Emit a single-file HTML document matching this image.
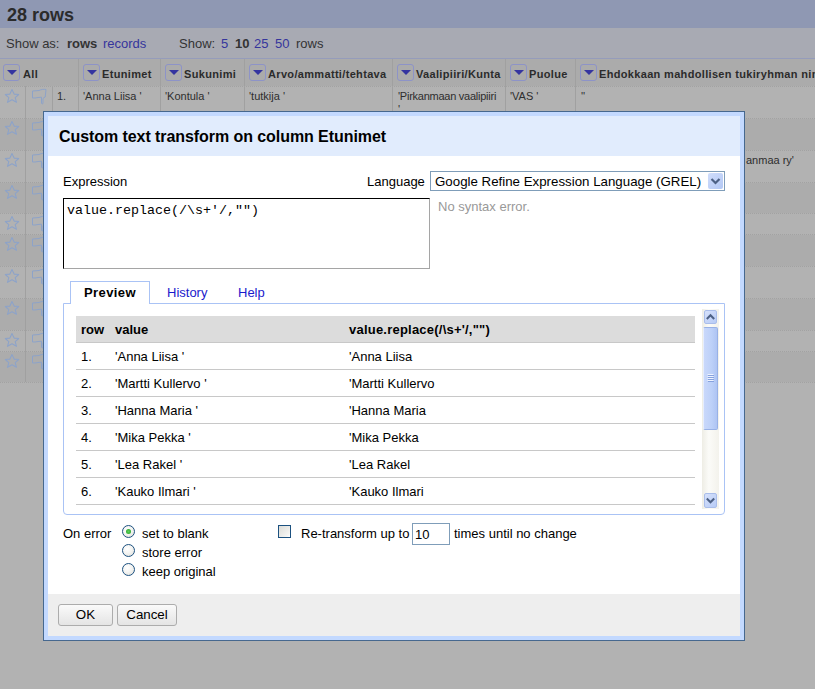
<!DOCTYPE html><html><head><meta charset="utf-8"><style>
*{margin:0;padding:0;box-sizing:border-box}
html,body{width:815px;height:689px;overflow:hidden;background:#b2b2b2;font-family:"Liberation Sans",sans-serif;font-size:13px;color:#000}
.a{position:absolute;white-space:nowrap}
.r{position:absolute}
.dd{position:absolute;width:17px;height:17px;border:1px solid #8d93c8;border-radius:3px}
.dd:after{content:"";position:absolute;left:2.5px;top:5px;border-left:5px solid transparent;border-right:5px solid transparent;border-top:5.5px solid #3535a0}
.btn{position:absolute;height:22px;border:1px solid #acacac;border-radius:3px;background:linear-gradient(#fafafa,#e4e4e4);font-size:13.33px;line-height:20px;text-align:center}
.radio{position:absolute;width:13px;height:13px;border:1px solid #1c5180;border-radius:50%;background:radial-gradient(circle at 40% 35%,#ffffff 0,#f4f4f2 45%,#dcdcd6 100%)}
</style></head><body>
<div class="r" style="left:0;top:0;width:815px;height:28px;background:#8f98b3"></div>
<div class="a" style="left:7px;top:5.00px;font-size:18px;line-height:20px;font-weight:bold;color:#2b2b2b">28 rows</div>
<div class="r" style="left:0;top:28px;width:815px;height:30px;background:#a8aab3"></div>
<div class="r" style="left:0;top:58px;width:815px;height:1px;background:#959cbb"></div>
<div class="a" style="left:6px;top:36.00px;font-size:13px;line-height:15px;color:#333">Show as:</div>
<div class="a" style="left:67px;top:36.00px;font-size:13px;line-height:15px;color:#333;font-weight:bold">rows</div>
<div class="a" style="left:103px;top:36.00px;font-size:13px;line-height:15px;color:#35359c">records</div>
<div class="a" style="left:179px;top:36.00px;font-size:13px;line-height:15px;color:#333">Show:</div>
<div class="a" style="left:221px;top:36.00px;font-size:13px;line-height:15px;color:#35359c">5</div>
<div class="a" style="left:235px;top:36.00px;font-size:13px;line-height:15px;color:#333;font-weight:bold">10</div>
<div class="a" style="left:254px;top:36.00px;font-size:13px;line-height:15px;color:#35359c">25</div>
<div class="a" style="left:275px;top:36.00px;font-size:13px;line-height:15px;color:#35359c">50</div>
<div class="a" style="left:296px;top:36.00px;font-size:13px;line-height:15px;color:#333">rows</div>
<div class="r" style="left:0;top:59px;width:815px;height:27px;background:#ababab"></div>
<div class="r" style="left:78px;top:59px;width:1px;height:323px;background:#a0a0a0"></div>
<div class="r" style="left:160px;top:59px;width:1px;height:323px;background:#a0a0a0"></div>
<div class="r" style="left:244px;top:59px;width:1px;height:323px;background:#a0a0a0"></div>
<div class="r" style="left:392px;top:59px;width:1px;height:323px;background:#a0a0a0"></div>
<div class="r" style="left:505px;top:59px;width:1px;height:323px;background:#a0a0a0"></div>
<div class="r" style="left:575px;top:59px;width:1px;height:323px;background:#a0a0a0"></div>
<div class="r" style="left:25px;top:86px;width:1px;height:296px;background:#a0a0a0"></div>
<div class="r" style="left:52px;top:86px;width:1px;height:296px;background:#a0a0a0"></div>
<div class="dd" style="left:3px;top:64px"></div>
<div class="a" style="left:23px;top:68.00px;font-size:11px;line-height:12px;font-weight:bold;color:#2b2b2b;letter-spacing:0.33px">All</div>
<div class="dd" style="left:83px;top:64px"></div>
<div class="a" style="left:102px;top:68.00px;font-size:11px;line-height:12px;font-weight:bold;color:#2b2b2b;letter-spacing:0.33px">Etunimet</div>
<div class="dd" style="left:165px;top:64px"></div>
<div class="a" style="left:184px;top:68.00px;font-size:11px;line-height:12px;font-weight:bold;color:#2b2b2b;letter-spacing:0.33px">Sukunimi</div>
<div class="dd" style="left:249px;top:64px"></div>
<div class="a" style="left:268px;top:68.00px;font-size:11px;line-height:12px;font-weight:bold;color:#2b2b2b;letter-spacing:0.33px">Arvo/ammatti/tehtava</div>
<div class="dd" style="left:397px;top:64px"></div>
<div class="a" style="left:416px;top:68.00px;font-size:11px;line-height:12px;font-weight:bold;color:#2b2b2b;letter-spacing:0.33px">Vaalipiiri/Kunta</div>
<div class="dd" style="left:510px;top:64px"></div>
<div class="a" style="left:529px;top:68.00px;font-size:11px;line-height:12px;font-weight:bold;color:#2b2b2b;letter-spacing:0.33px">Puolue</div>
<div class="dd" style="left:580px;top:64px"></div>
<div class="a" style="left:599px;top:68.00px;font-size:11px;line-height:12px;font-weight:bold;color:#2b2b2b;letter-spacing:0.33px">Ehdokkaan mahdollisen tukiryhman nimi</div>
<div class="r" style="left:0;top:87px;width:815px;height:31px;background:#b2b2b2"></div>
<div class="r" style="left:0;top:119px;width:815px;height:31px;background:#acacac"></div>
<div class="r" style="left:0;top:151px;width:815px;height:31px;background:#b2b2b2"></div>
<div class="r" style="left:0;top:183px;width:815px;height:30px;background:#acacac"></div>
<div class="r" style="left:0;top:214px;width:815px;height:20px;background:#b2b2b2"></div>
<div class="r" style="left:0;top:235px;width:815px;height:31px;background:#acacac"></div>
<div class="r" style="left:0;top:267px;width:815px;height:31px;background:#b2b2b2"></div>
<div class="r" style="left:0;top:299px;width:815px;height:31px;background:#acacac"></div>
<div class="r" style="left:0;top:331px;width:815px;height:20px;background:#b2b2b2"></div>
<div class="r" style="left:0;top:352px;width:815px;height:30px;background:#acacac"></div>
<div class="r" style="left:0;top:86px;width:815px;height:1px;background-image:linear-gradient(90deg,#a2a2a2 50%,transparent 50%);background-size:2px 1px"></div>
<div class="r" style="left:0;top:118px;width:815px;height:1px;background-image:linear-gradient(90deg,#a2a2a2 50%,transparent 50%);background-size:2px 1px"></div>
<div class="r" style="left:0;top:150px;width:815px;height:1px;background-image:linear-gradient(90deg,#a2a2a2 50%,transparent 50%);background-size:2px 1px"></div>
<div class="r" style="left:0;top:182px;width:815px;height:1px;background-image:linear-gradient(90deg,#a2a2a2 50%,transparent 50%);background-size:2px 1px"></div>
<div class="r" style="left:0;top:213px;width:815px;height:1px;background-image:linear-gradient(90deg,#a2a2a2 50%,transparent 50%);background-size:2px 1px"></div>
<div class="r" style="left:0;top:234px;width:815px;height:1px;background-image:linear-gradient(90deg,#a2a2a2 50%,transparent 50%);background-size:2px 1px"></div>
<div class="r" style="left:0;top:266px;width:815px;height:1px;background-image:linear-gradient(90deg,#a2a2a2 50%,transparent 50%);background-size:2px 1px"></div>
<div class="r" style="left:0;top:298px;width:815px;height:1px;background-image:linear-gradient(90deg,#a2a2a2 50%,transparent 50%);background-size:2px 1px"></div>
<div class="r" style="left:0;top:330px;width:815px;height:1px;background-image:linear-gradient(90deg,#a2a2a2 50%,transparent 50%);background-size:2px 1px"></div>
<div class="r" style="left:0;top:351px;width:815px;height:1px;background-image:linear-gradient(90deg,#a2a2a2 50%,transparent 50%);background-size:2px 1px"></div>
<div class="r" style="left:0;top:382px;width:815px;height:1px;background-image:linear-gradient(90deg,#a2a2a2 50%,transparent 50%);background-size:2px 1px"></div>
<div class="r" style="left:78px;top:87px;width:1px;height:295px;background:#a0a0a0"></div>
<div class="r" style="left:160px;top:87px;width:1px;height:295px;background:#a0a0a0"></div>
<div class="r" style="left:244px;top:87px;width:1px;height:295px;background:#a0a0a0"></div>
<div class="r" style="left:392px;top:87px;width:1px;height:295px;background:#a0a0a0"></div>
<div class="r" style="left:505px;top:87px;width:1px;height:295px;background:#a0a0a0"></div>
<div class="r" style="left:575px;top:87px;width:1px;height:295px;background:#a0a0a0"></div>
<div class="r" style="left:25px;top:87px;width:1px;height:295px;background:#a0a0a0"></div>
<div class="r" style="left:52px;top:87px;width:1px;height:295px;background:#a0a0a0"></div>
<svg class="r" style="left:0px;top:86px" width="25" height="21" viewBox="0 0 25 21"><path d="M12 3.6 L14.1 8.1 L18.7 8.5 L15.2 11.6 L16.5 16.3 L12 13.8 L7.5 16.3 L8.8 11.6 L5.3 8.5 L9.9 8.1 Z" fill="none" stroke="#8da3c9" stroke-width="1.1" stroke-linejoin="round"/></svg>
<svg class="r" style="left:31px;top:88px" width="18" height="17" viewBox="0 0 18 17"><path d="M1.5 3 C4 2.5 6 3 8 2.5 C10 1.5 13 1 15 1.5 L14.2 9 C13 9.5 12.5 10 12 10.5 L12 15.5 C11.5 16 10.5 16 10.5 15 L10.5 9.2 C8 9.5 6 9.5 4 10 L1.5 10 Z" fill="none" stroke="#8da3c9" stroke-width="1"/></svg>
<svg class="r" style="left:0px;top:118px" width="25" height="21" viewBox="0 0 25 21"><path d="M12 3.6 L14.1 8.1 L18.7 8.5 L15.2 11.6 L16.5 16.3 L12 13.8 L7.5 16.3 L8.8 11.6 L5.3 8.5 L9.9 8.1 Z" fill="none" stroke="#8da3c9" stroke-width="1.1" stroke-linejoin="round"/></svg>
<svg class="r" style="left:31px;top:120px" width="18" height="17" viewBox="0 0 18 17"><path d="M1.5 3 C4 2.5 6 3 8 2.5 C10 1.5 13 1 15 1.5 L14.2 9 C13 9.5 12.5 10 12 10.5 L12 15.5 C11.5 16 10.5 16 10.5 15 L10.5 9.2 C8 9.5 6 9.5 4 10 L1.5 10 Z" fill="none" stroke="#8da3c9" stroke-width="1"/></svg>
<svg class="r" style="left:0px;top:150px" width="25" height="21" viewBox="0 0 25 21"><path d="M12 3.6 L14.1 8.1 L18.7 8.5 L15.2 11.6 L16.5 16.3 L12 13.8 L7.5 16.3 L8.8 11.6 L5.3 8.5 L9.9 8.1 Z" fill="none" stroke="#8da3c9" stroke-width="1.1" stroke-linejoin="round"/></svg>
<svg class="r" style="left:31px;top:152px" width="18" height="17" viewBox="0 0 18 17"><path d="M1.5 3 C4 2.5 6 3 8 2.5 C10 1.5 13 1 15 1.5 L14.2 9 C13 9.5 12.5 10 12 10.5 L12 15.5 C11.5 16 10.5 16 10.5 15 L10.5 9.2 C8 9.5 6 9.5 4 10 L1.5 10 Z" fill="none" stroke="#8da3c9" stroke-width="1"/></svg>
<svg class="r" style="left:0px;top:182px" width="25" height="21" viewBox="0 0 25 21"><path d="M12 3.6 L14.1 8.1 L18.7 8.5 L15.2 11.6 L16.5 16.3 L12 13.8 L7.5 16.3 L8.8 11.6 L5.3 8.5 L9.9 8.1 Z" fill="none" stroke="#8da3c9" stroke-width="1.1" stroke-linejoin="round"/></svg>
<svg class="r" style="left:31px;top:184px" width="18" height="17" viewBox="0 0 18 17"><path d="M1.5 3 C4 2.5 6 3 8 2.5 C10 1.5 13 1 15 1.5 L14.2 9 C13 9.5 12.5 10 12 10.5 L12 15.5 C11.5 16 10.5 16 10.5 15 L10.5 9.2 C8 9.5 6 9.5 4 10 L1.5 10 Z" fill="none" stroke="#8da3c9" stroke-width="1"/></svg>
<svg class="r" style="left:0px;top:213px" width="25" height="21" viewBox="0 0 25 21"><path d="M12 3.6 L14.1 8.1 L18.7 8.5 L15.2 11.6 L16.5 16.3 L12 13.8 L7.5 16.3 L8.8 11.6 L5.3 8.5 L9.9 8.1 Z" fill="none" stroke="#8da3c9" stroke-width="1.1" stroke-linejoin="round"/></svg>
<svg class="r" style="left:31px;top:215px" width="18" height="17" viewBox="0 0 18 17"><path d="M1.5 3 C4 2.5 6 3 8 2.5 C10 1.5 13 1 15 1.5 L14.2 9 C13 9.5 12.5 10 12 10.5 L12 15.5 C11.5 16 10.5 16 10.5 15 L10.5 9.2 C8 9.5 6 9.5 4 10 L1.5 10 Z" fill="none" stroke="#8da3c9" stroke-width="1"/></svg>
<svg class="r" style="left:0px;top:234px" width="25" height="21" viewBox="0 0 25 21"><path d="M12 3.6 L14.1 8.1 L18.7 8.5 L15.2 11.6 L16.5 16.3 L12 13.8 L7.5 16.3 L8.8 11.6 L5.3 8.5 L9.9 8.1 Z" fill="none" stroke="#8da3c9" stroke-width="1.1" stroke-linejoin="round"/></svg>
<svg class="r" style="left:31px;top:236px" width="18" height="17" viewBox="0 0 18 17"><path d="M1.5 3 C4 2.5 6 3 8 2.5 C10 1.5 13 1 15 1.5 L14.2 9 C13 9.5 12.5 10 12 10.5 L12 15.5 C11.5 16 10.5 16 10.5 15 L10.5 9.2 C8 9.5 6 9.5 4 10 L1.5 10 Z" fill="none" stroke="#8da3c9" stroke-width="1"/></svg>
<svg class="r" style="left:0px;top:266px" width="25" height="21" viewBox="0 0 25 21"><path d="M12 3.6 L14.1 8.1 L18.7 8.5 L15.2 11.6 L16.5 16.3 L12 13.8 L7.5 16.3 L8.8 11.6 L5.3 8.5 L9.9 8.1 Z" fill="none" stroke="#8da3c9" stroke-width="1.1" stroke-linejoin="round"/></svg>
<svg class="r" style="left:31px;top:268px" width="18" height="17" viewBox="0 0 18 17"><path d="M1.5 3 C4 2.5 6 3 8 2.5 C10 1.5 13 1 15 1.5 L14.2 9 C13 9.5 12.5 10 12 10.5 L12 15.5 C11.5 16 10.5 16 10.5 15 L10.5 9.2 C8 9.5 6 9.5 4 10 L1.5 10 Z" fill="none" stroke="#8da3c9" stroke-width="1"/></svg>
<svg class="r" style="left:0px;top:298px" width="25" height="21" viewBox="0 0 25 21"><path d="M12 3.6 L14.1 8.1 L18.7 8.5 L15.2 11.6 L16.5 16.3 L12 13.8 L7.5 16.3 L8.8 11.6 L5.3 8.5 L9.9 8.1 Z" fill="none" stroke="#8da3c9" stroke-width="1.1" stroke-linejoin="round"/></svg>
<svg class="r" style="left:31px;top:300px" width="18" height="17" viewBox="0 0 18 17"><path d="M1.5 3 C4 2.5 6 3 8 2.5 C10 1.5 13 1 15 1.5 L14.2 9 C13 9.5 12.5 10 12 10.5 L12 15.5 C11.5 16 10.5 16 10.5 15 L10.5 9.2 C8 9.5 6 9.5 4 10 L1.5 10 Z" fill="none" stroke="#8da3c9" stroke-width="1"/></svg>
<svg class="r" style="left:0px;top:330px" width="25" height="21" viewBox="0 0 25 21"><path d="M12 3.6 L14.1 8.1 L18.7 8.5 L15.2 11.6 L16.5 16.3 L12 13.8 L7.5 16.3 L8.8 11.6 L5.3 8.5 L9.9 8.1 Z" fill="none" stroke="#8da3c9" stroke-width="1.1" stroke-linejoin="round"/></svg>
<svg class="r" style="left:31px;top:332px" width="18" height="17" viewBox="0 0 18 17"><path d="M1.5 3 C4 2.5 6 3 8 2.5 C10 1.5 13 1 15 1.5 L14.2 9 C13 9.5 12.5 10 12 10.5 L12 15.5 C11.5 16 10.5 16 10.5 15 L10.5 9.2 C8 9.5 6 9.5 4 10 L1.5 10 Z" fill="none" stroke="#8da3c9" stroke-width="1"/></svg>
<svg class="r" style="left:0px;top:351px" width="25" height="21" viewBox="0 0 25 21"><path d="M12 3.6 L14.1 8.1 L18.7 8.5 L15.2 11.6 L16.5 16.3 L12 13.8 L7.5 16.3 L8.8 11.6 L5.3 8.5 L9.9 8.1 Z" fill="none" stroke="#8da3c9" stroke-width="1.1" stroke-linejoin="round"/></svg>
<svg class="r" style="left:31px;top:353px" width="18" height="17" viewBox="0 0 18 17"><path d="M1.5 3 C4 2.5 6 3 8 2.5 C10 1.5 13 1 15 1.5 L14.2 9 C13 9.5 12.5 10 12 10.5 L12 15.5 C11.5 16 10.5 16 10.5 15 L10.5 9.2 C8 9.5 6 9.5 4 10 L1.5 10 Z" fill="none" stroke="#8da3c9" stroke-width="1"/></svg>
<div class="a" style="left:57px;top:90.00px;font-size:11px;line-height:12px;color:#2e2e2e">1.</div>
<div class="a" style="left:83px;top:90.00px;font-size:11px;line-height:12px;color:#2e2e2e">'Anna Liisa '</div>
<div class="a" style="left:165px;top:90.00px;font-size:11px;line-height:12px;color:#2e2e2e">'Kontula '</div>
<div class="a" style="left:249px;top:90.00px;font-size:11px;line-height:12px;color:#2e2e2e">'tutkija '</div>
<div class="a" style="left:398px;top:90.00px;font-size:11px;line-height:12px;color:#2e2e2e;letter-spacing:-0.25px">'Pirkanmaan vaalipiiri</div>
<div class="a" style="left:398px;top:103.00px;font-size:11px;line-height:12px;color:#2e2e2e">'</div>
<div class="a" style="left:510px;top:90.00px;font-size:11px;line-height:12px;color:#2e2e2e">'VAS '</div>
<div class="a" style="left:581px;top:90.00px;font-size:11px;line-height:12px;color:#2e2e2e">''</div>
<div class="a" style="left:746px;top:154.00px;font-size:11px;line-height:12px;color:#2e2e2e">anmaa ry'</div>
<div class="r" style="left:43px;top:111px;width:702px;height:530px;border:1px solid #46688f;background:#c3d9ff"></div>
<div class="r" style="left:48px;top:116px;width:692px;height:40px;background:#e1ecfd"></div>
<div class="a" style="left:59px;top:128.00px;font-size:16px;line-height:17px;font-weight:bold;letter-spacing:-0.07px">Custom text transform on column Etunimet</div>
<div class="r" style="left:48px;top:156px;width:692px;height:438px;background:#fff"></div>
<div class="r" style="left:48px;top:594px;width:692px;height:42px;background:#eeeeee"></div>
<div class="btn" style="left:58px;top:604px;width:55px">OK</div>
<div class="btn" style="left:117px;top:604px;width:60px">Cancel</div>
<div class="a" style="left:63px;top:174.00px;font-size:13px;line-height:15px;">Expression</div>
<div class="a" style="left:367px;top:174.00px;font-size:13px;line-height:15px;">Language</div>
<div class="r" style="left:430px;top:171px;width:295px;height:20px;border:1px solid #7f9db9;background:#fff"></div>
<div class="a" style="left:435px;top:174.00px;font-size:13.3px;line-height:15px;">Google Refine Expression Language (GREL)</div>
<div class="r" style="left:708px;top:173px;width:15px;height:16px;border-radius:2px;background:linear-gradient(135deg,#d0ddfb,#b3c8f5)"></div>
<svg class="r" style="left:708px;top:173px" width="15" height="16" viewBox="0 0 15 16"><path d="M3.5 6 L7.5 10 L11.5 6" fill="none" stroke="#4d6185" stroke-width="2.2"/></svg>
<div class="r" style="left:63px;top:198px;width:367px;height:71px;border-top:1px solid #000;border-left:1px solid #000;border-right:1px solid #a5a5a5;border-bottom:1px solid #a5a5a5;background:#fff"></div>
<div class="a" style="left:67px;top:202.5px;font-family:'Liberation Mono',monospace;font-size:13.33px;line-height:15px">value.replace(/\s+'/,"")</div>
<div class="a" style="left:438px;top:199.00px;font-size:13px;line-height:15px;color:#999">No syntax error.</div>
<div class="r" style="left:63px;top:303px;width:662px;height:212px;border:1px solid #aac3f5;border-radius:0 0 4px 4px"></div>
<div class="r" style="left:70px;top:281px;width:80px;height:23px;border:1px solid #aac3f5;border-bottom:none;background:#fff"></div>
<div class="a" style="left:84px;top:285.00px;font-size:13px;line-height:15px;font-weight:bold;letter-spacing:0.4px">Preview</div>
<div class="a" style="left:167px;top:285.00px;font-size:13px;line-height:15px;color:#1a1acc">History</div>
<div class="a" style="left:238px;top:285.00px;font-size:13px;line-height:15px;color:#1a1acc">Help</div>
<div class="r" style="left:76px;top:316px;width:619px;height:26px;background:#dcdcdc"></div>
<div class="r" style="left:76px;top:342px;width:619px;height:1px;background:#c8c8c8"></div>
<div class="r" style="left:76px;top:369px;width:619px;height:1px;background:#c8c8c8"></div>
<div class="r" style="left:76px;top:396px;width:619px;height:1px;background:#c8c8c8"></div>
<div class="r" style="left:76px;top:423px;width:619px;height:1px;background:#c8c8c8"></div>
<div class="r" style="left:76px;top:450px;width:619px;height:1px;background:#c8c8c8"></div>
<div class="r" style="left:76px;top:477px;width:619px;height:1px;background:#c8c8c8"></div>
<div class="r" style="left:76px;top:504px;width:619px;height:1px;background:#c8c8c8"></div>
<div class="a" style="left:81px;top:322.00px;font-size:13px;line-height:15px;font-weight:bold">row</div>
<div class="a" style="left:115px;top:322.00px;font-size:13px;line-height:15px;font-weight:bold">value</div>
<div class="a" style="left:349px;top:322.00px;font-size:13px;line-height:15px;font-weight:bold;letter-spacing:0.22px">value.replace(/\s+'/,"")</div>
<div class="a" style="left:81px;top:349.00px;font-size:13px;line-height:15px;">1.</div>
<div class="a" style="left:115px;top:349.00px;font-size:13px;line-height:15px;">'Anna Liisa '</div>
<div class="a" style="left:349px;top:349.00px;font-size:13px;line-height:15px;">'Anna Liisa</div>
<div class="a" style="left:81px;top:376.00px;font-size:13px;line-height:15px;">2.</div>
<div class="a" style="left:115px;top:376.00px;font-size:13px;line-height:15px;">'Martti Kullervo '</div>
<div class="a" style="left:349px;top:376.00px;font-size:13px;line-height:15px;">'Martti Kullervo</div>
<div class="a" style="left:81px;top:403.00px;font-size:13px;line-height:15px;">3.</div>
<div class="a" style="left:115px;top:403.00px;font-size:13px;line-height:15px;">'Hanna Maria '</div>
<div class="a" style="left:349px;top:403.00px;font-size:13px;line-height:15px;">'Hanna Maria</div>
<div class="a" style="left:81px;top:430.00px;font-size:13px;line-height:15px;">4.</div>
<div class="a" style="left:115px;top:430.00px;font-size:13px;line-height:15px;">'Mika Pekka '</div>
<div class="a" style="left:349px;top:430.00px;font-size:13px;line-height:15px;">'Mika Pekka</div>
<div class="a" style="left:81px;top:457.00px;font-size:13px;line-height:15px;">5.</div>
<div class="a" style="left:115px;top:457.00px;font-size:13px;line-height:15px;">'Lea Rakel '</div>
<div class="a" style="left:349px;top:457.00px;font-size:13px;line-height:15px;">'Lea Rakel</div>
<div class="a" style="left:81px;top:484.00px;font-size:13px;line-height:15px;">6.</div>
<div class="a" style="left:115px;top:484.00px;font-size:13px;line-height:15px;">'Kauko Ilmari '</div>
<div class="a" style="left:349px;top:484.00px;font-size:13px;line-height:15px;">'Kauko Ilmari</div>
<div class="r" style="left:702px;top:309px;width:17px;height:200px;background:linear-gradient(90deg,#eeede5,#fbfbf8 40%,#f3f2ec)"></div>
<div class="r" style="left:704px;top:310px;width:13px;height:14px;border:1px solid #a9bdea;border-radius:2px;background:linear-gradient(135deg,#d6e1fb,#b7cbf6)"></div>
<svg class="r" style="left:704px;top:310px" width="13" height="14" viewBox="0 0 13 14"><path d="M2.8 9 L6.5 5.2 L10.2 9" fill="none" stroke="#4d6185" stroke-width="2"/></svg>
<div class="r" style="left:703px;top:327px;width:15px;height:103px;border:1px solid #98b1e6;border-left-color:#e6edfd;border-radius:2px;background:linear-gradient(90deg,#c9d8fb,#bcd0f8 60%,#aec4f3)"></div>
<svg class="r" style="left:703px;top:327px" width="15" height="103"><path d="M4.5 47.5h6M4.5 49.5h6M4.5 51.5h6M4.5 53.5h6" stroke="#eef3ff" stroke-width="1"/><path d="M5 48.5h6M5 50.5h6M5 52.5h6M5 54.5h6" stroke="#86a2de" stroke-width="1"/></svg>
<div class="r" style="left:704px;top:493px;width:13px;height:15px;border:1px solid #a9bdea;border-radius:2px;background:linear-gradient(135deg,#d6e1fb,#b7cbf6)"></div>
<svg class="r" style="left:704px;top:493px" width="13" height="15" viewBox="0 0 13 15"><path d="M2.8 5.5 L6.5 9.3 L10.2 5.5" fill="none" stroke="#4d6185" stroke-width="2"/></svg>
<div class="a" style="left:63px;top:526.00px;font-size:13px;line-height:15px;">On error</div>
<div class="radio" style="left:122px;top:525px"></div>
<div class="a" style="left:142px;top:526.00px;font-size:13px;line-height:15px;">set to blank</div>
<div class="radio" style="left:122px;top:544px"></div>
<div class="a" style="left:142px;top:545.00px;font-size:13px;line-height:15px;">store error</div>
<div class="radio" style="left:122px;top:563px"></div>
<div class="a" style="left:142px;top:564.00px;font-size:13px;line-height:15px;">keep original</div>
<div class="r" style="left:126px;top:529px;width:5px;height:5px;border-radius:50%;background:radial-gradient(circle,#5dd05d,#21a121)"></div>
<div class="r" style="left:278px;top:525px;width:13px;height:13px;border:1px solid #1c5180;background:linear-gradient(135deg,#dcdcd7,#f4f4f2 80%,#fff)"></div>
<div class="a" style="left:301px;top:526.00px;font-size:13px;line-height:15px;">Re-transform up to</div>
<div class="r" style="left:412px;top:523px;width:38px;height:22px;border:1px solid #7f9db9;background:#fff"></div>
<div class="a" style="left:415px;top:527.00px;font-size:13px;line-height:15px;">10</div>
<div class="a" style="left:454px;top:526.00px;font-size:13px;line-height:15px;">times until no change</div>
</body></html>
